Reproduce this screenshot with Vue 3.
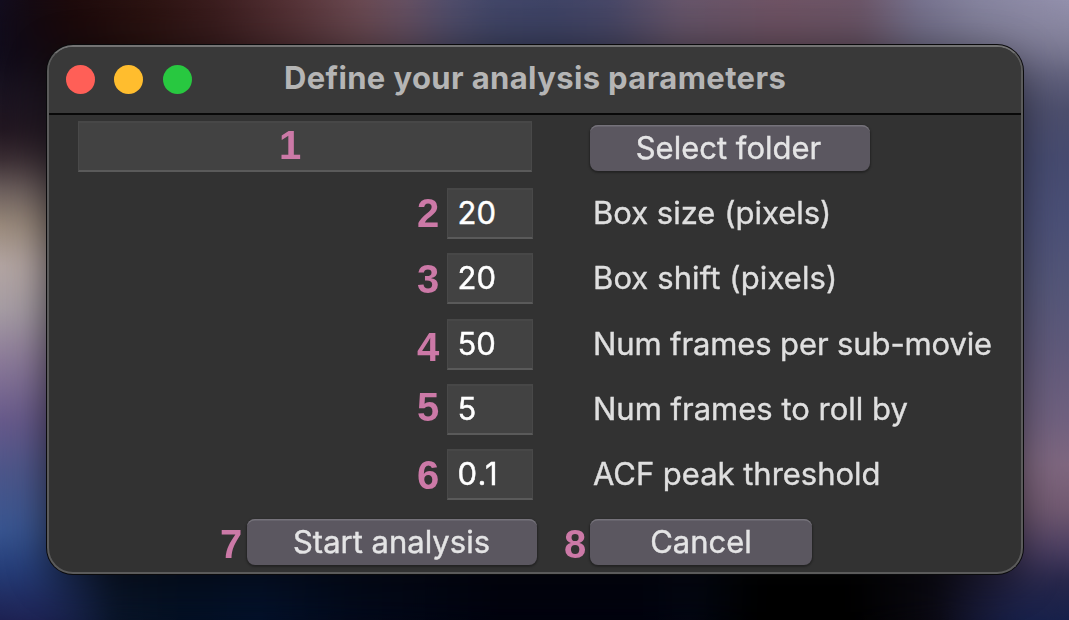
<script setup>
import { ref } from 'vue'

const folder = ref('')
const fields = ref([
  { mark: 2, value: '20', label: 'Box size (pixels)', shift: -0.5, spacing: 0 },
  { mark: 3, value: '20', label: 'Box shift (pixels)', shift: 0.5, spacing: 0.1 },
  { mark: 4, value: '50', label: 'Num frames per sub-movie', shift: 3, spacing: -0.12 },
  { mark: 5, value: '5', label: 'Num frames to roll by', shift: -2, spacing: 0 },
  { mark: 6, value: '0.1', label: 'ACF peak threshold', shift: 0.5, spacing: -0.03 },
])
</script>

<template>
  <div class="desktop">
    <div class="glow top"></div>
    <div class="glow bottom"></div>
    <div class="glow left"></div>
    <div class="glow right"></div>
    <div class="soften"></div>
    <section class="window">
      <header class="titlebar">
        <div class="lights">
          <i class="light close"></i>
          <i class="light minimise"></i>
          <i class="light zoom"></i>
        </div>
        <h1>Define your analysis parameters</h1>
      </header>
      <form class="form" @submit.prevent>
        <div class="row first">
          <div class="entry">
            <div class="box wide">{{ folder }}<b class="mark one">1</b></div>
          </div>
          <button class="btn select" type="button">Select folder</button>
        </div>
        <div v-for="f in fields" :key="f.mark" class="row">
          <div class="entry">
            <div class="box" :class="{ decimal: f.value.includes('.') }">{{ f.value }}<b class="mark" :style="{ marginTop: f.shift + 'px' }">{{ f.mark }}</b></div>
          </div>
          <span class="label" :style="{ letterSpacing: f.spacing + 'px' }">{{ f.label }}</span>
        </div>
        <div class="row last">
          <div class="entry">
            <button class="btn start" type="button">Start analysis<b class="mark">7</b></button>
          </div>
          <button class="btn cancel" type="button">Cancel<b class="mark">8</b></button>
        </div>
      </form>
    </section>
  </div>
</template>

<style>
body { overflow: hidden; background: #03050f; }
</style>

<style scoped>
* { box-sizing: border-box; }
.desktop {
  position: relative;
  width: 1069px;
  height: 620px;
  padding: 45px 46px 46px 47px;
  overflow: hidden;
  background: #2a2430;
  font-family: Inter, "Liberation Sans", sans-serif;
}
.glow { position: absolute; }
.soften {
  position: absolute;
  inset: 0;
  backdrop-filter: blur(12px);
}
.glow.top {
  inset: 0 0 auto 0;
  height: 130px;
  background:
    linear-gradient(180deg, transparent, rgba(0, 0, 0, 0.15) 50px),
    linear-gradient(90deg, #120d1f 0, #150a12 30px, #1d0a0b 70px, #2c1311 150px, #3b1d1e 215px, #553236 290px, #6b4a52 360px, #675163 405px, #514e6c 450px, #424769 495px, #3f4467 550px, #484868 610px, #67566b 680px, #705465 780px, #6c5668 860px, #77738f 920px, #8785a0 980px, #9592ae 1069px);
  -webkit-mask: linear-gradient(180deg, #000 60px, transparent 130px);
  mask: linear-gradient(180deg, #000 60px, transparent 130px);
}
.glow.bottom {
  inset: auto 0 0 0;
  height: 90px;
  background: linear-gradient(90deg, #1e2b5c 0, #172547 45px, #091427 120px, #041023 180px, #041129 260px, #030a1b 350px, #02030e 500px, #02030e 640px, #030712 690px, #010101 760px, #010101 850px, #09080f 920px, #16152b 1000px, #17214a 1069px);
  -webkit-mask: linear-gradient(0deg, #000 50px, transparent 90px);
  mask: linear-gradient(0deg, #000 50px, transparent 90px);
}
.glow.left {
  inset: 0 auto 0 0;
  width: 110px;
  background: linear-gradient(180deg, #110d22 0, #15101f 70px, #211620 130px, #3a2d33 160px, #6c5f5d 190px, #99897a 225px, #b3a5a2 265px, #a59ca3 310px, #8b7a98 360px, #67598a 420px, #4d5689 470px, #385590 530px, #253d78 570px, #1d2050 620px);
  -webkit-mask: linear-gradient(90deg, #000 30px, transparent 110px), linear-gradient(180deg, transparent 20px, #000 130px);
  mask: linear-gradient(90deg, #000 30px, transparent 110px), linear-gradient(180deg, transparent 20px, #000 130px);
  mask-composite: intersect;
}
.glow.right {
  inset: 0 0 0 auto;
  width: 130px;
  background: linear-gradient(180deg, #9491ad 0, #85839d 35px, #63637f 70px, #4c4e6c 110px, #464b70 160px, #4b5077 220px, #555779 290px, #605a7b 350px, #70617f 420px, #806880 465px, #725a71 510px, #4b3e61 550px, #272649 580px, #16204a 620px);
  -webkit-mask: linear-gradient(270deg, #000 40px, transparent 130px), linear-gradient(180deg, transparent 0, #000 90px);
  mask: linear-gradient(270deg, #000 40px, transparent 130px), linear-gradient(180deg, transparent 0, #000 90px);
  mask-composite: intersect;
}
.window {
  position: relative;
  display: flex;
  flex-direction: column;
  height: 529px;
  border: 2px solid #5b5b5b;
  border-top-color: #737373;
  border-radius: 26px;
  background: #323232;
  box-shadow: 0 0 0 1px #0a0a0c, 0 8px 40px 0 rgba(0, 0, 0, 0.42);
}
.titlebar {
  position: relative;
  display: flex;
  align-items: flex-start;
  justify-content: center;
  flex: none;
  height: 68px;
  padding-top: 11px;
  border-bottom: 2px solid #080808;
  border-radius: 24px 24px 0 0;
  background: #393939;
}
.lights {
  position: absolute;
  left: 17px;
  top: 17.5px;
  display: flex;
  gap: 19.3px;
}
.light { width: 29px; height: 29px; border-radius: 50%; }
.close { background: #ff5f57; }
.minimise { background: #ffbd2e; }
.zoom { background: #28c840; }
h1 {
  margin: 0;
  font-size: 31px;
  line-height: 40px;
  font-weight: 700;
  letter-spacing: 0.37px;
  color: #b5b5b5;
  white-space: nowrap;
}
.form {
  display: flex;
  flex-direction: column;
  flex: 1;
  padding: 6px 0 0 29px;
}
.row {
  display: flex;
  align-items: center;
  gap: 58px;
  height: 65.3px;
}
.row.first { height: 60px; align-items: flex-start; }
.entry {
  display: flex;
  justify-content: flex-end;
  width: 454px;
}
.box {
  position: relative;
  width: 85.5px;
  height: 51px;
  margin-right: -0.5px;
  padding-left: 9.5px;
  border: 1px solid #494949;
  border-top: 2px solid #474747;
  border-bottom: 2px solid #5a5a5a;
  background: #424242;
  color: #fff;
  font-size: 31px;
  line-height: 46px;
  white-space: nowrap;
  -webkit-text-stroke: 0.4px currentColor;
}
.box.wide { width: 100%; margin-right: 0; }
.box.decimal { letter-spacing: 1.2px; }
.label {
  padding-left: 3px;
  margin-top: -1px;
  font-size: 31px;
  line-height: 40px;
  color: #dfdfdf;
  white-space: nowrap;
  -webkit-text-stroke: 0.4px currentColor;
}
.btn {
  position: relative;
  height: 46px;
  padding: 0 1px 0 0;
  border: 0;
  border-radius: 8px;
  background: #5b5760;
  box-shadow: inset 0 2px 0 -0.5px #75727a, 0 1px 2px 1px rgba(0, 0, 0, 0.3);
  color: #e4e4e5;
  font: 400 31px/46px Inter, "Liberation Sans", sans-serif;
  white-space: nowrap;
  -webkit-text-stroke: 0.4px currentColor;
}
.select { width: 280px; margin-top: 4px; padding-right: 3px; }
.row.last { height: 46px; margin-top: 12px; gap: 53px; }
.last .entry { width: 459px; }
.start { width: 290px; }
.cancel { width: 222px; padding-right: 0; }
.mark {
  position: absolute;
  left: -31px;
  top: 1px;
  font: 700 40px/44px "Liberation Sans", Arial, sans-serif;
  letter-spacing: 0;
  color: #cc79a7;
  -webkit-text-stroke: 0;
}
.mark.one { left: 200px; top: 0; }
.btn .mark { left: -27px; top: 3px; }
.cancel .mark { left: -26px; }
</style>
